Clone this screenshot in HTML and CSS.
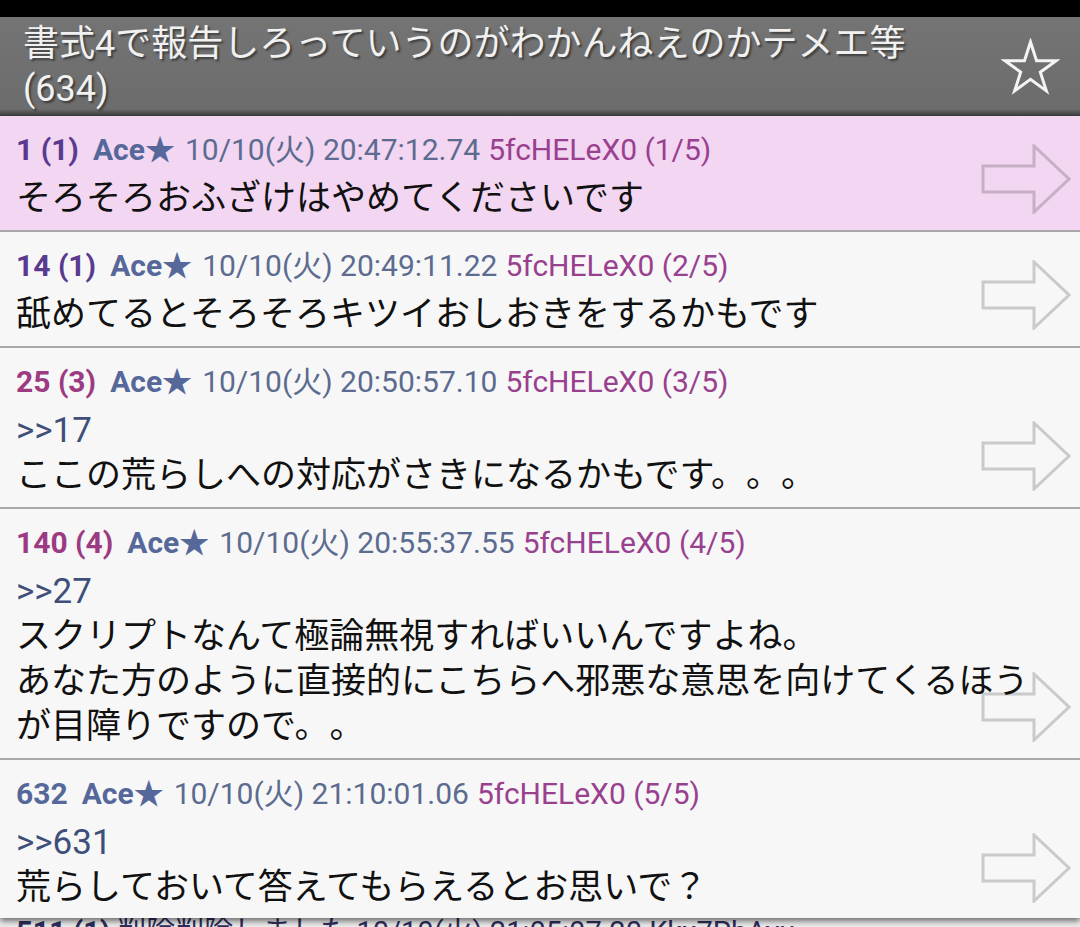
FILE: index.html
```html
<!DOCTYPE html>
<html lang="ja">
<head>
<meta charset="utf-8">
<title>書式4で報告しろっていうのがわかんねえのかテメエ等</title>
<link rel="stylesheet" href="styles.css">
</head>
<body>
<div class="statusbar"></div>
<header class="titlebar">
  <h1 class="title">書式4で報告しろっていうのがわかんねえのかテメエ等<span class="count">(634)</span></h1>
  <svg class="star" viewBox="-2 -2 59 57" width="59" height="57" aria-hidden="true"><polygon points="27.5,2 33.55,20.67 53.18,20.66 37.3,32.18 43.37,50.84 27.5,39.3 11.63,50.84 17.7,32.18 1.82,20.66 21.45,20.67" fill="none" stroke="#f4f4f4" stroke-width="3" stroke-linejoin="miter"/></svg>
</header>
<main class="popup">
  <article class="post hl">
    <div class="meta"><span class="num purple">1 (1)</span><span class="name">Ace★</span><span class="date">10/10(火) 20:47:12.74</span><span class="id">5fcHELeX0 (1/5)</span></div>
    <div class="body">そろそろおふざけはやめてくださいです</div>
    <svg class="arrow" viewBox="0 0 90 70" width="90" height="70" aria-hidden="true"><polygon points="2,22 53,22 53,2 88,35 53,68 53,48 2,48"/></svg>
  </article>
  <article class="post">
    <div class="meta"><span class="num purple">14 (1)</span><span class="name">Ace★</span><span class="date">10/10(火) 20:49:11.22</span><span class="id">5fcHELeX0 (2/5)</span></div>
    <div class="body">舐めてるとそろそろキツイおしおきをするかもです</div>
    <svg class="arrow" viewBox="0 0 90 70" width="90" height="70" aria-hidden="true"><polygon points="2,22 53,22 53,2 88,35 53,68 53,48 2,48"/></svg>
  </article>
  <article class="post">
    <div class="meta"><span class="num magenta">25 (3)</span><span class="name">Ace★</span><span class="date">10/10(火) 20:50:57.10</span><span class="id">5fcHELeX0 (3/5)</span></div>
    <div class="body"><span class="anchor">&gt;&gt;17</span><br>ここの荒らしへの対応がさきになるかもです。。。</div>
    <svg class="arrow" viewBox="0 0 90 70" width="90" height="70" aria-hidden="true"><polygon points="2,22 53,22 53,2 88,35 53,68 53,48 2,48"/></svg>
  </article>
  <article class="post">
    <div class="meta"><span class="num magenta">140 (4)</span><span class="name">Ace★</span><span class="date">10/10(火) 20:55:37.55</span><span class="id">5fcHELeX0 (4/5)</span></div>
    <div class="body"><span class="anchor">&gt;&gt;27</span><br>スクリプトなんて極論無視すればいいんですよね。<br>あなた方のように直接的にこちらへ邪悪な意思を向けてくるほう<br>が目障りですので。。</div>
    <svg class="arrow" viewBox="0 0 90 70" width="90" height="70" aria-hidden="true"><polygon points="2,22 53,22 53,2 88,35 53,68 53,48 2,48"/></svg>
  </article>
  <article class="post">
    <div class="meta"><span class="num blue">632</span><span class="name">Ace★</span><span class="date">10/10(火) 21:10:01.06</span><span class="id">5fcHELeX0 (5/5)</span></div>
    <div class="body"><span class="anchor">&gt;&gt;631</span><br>荒らしておいて答えてもらえるとお思いで？</div>
    <svg class="arrow" viewBox="0 0 90 70" width="90" height="70" aria-hidden="true"><polygon points="2,22 53,22 53,2 88,35 53,68 53,48 2,48"/></svg>
  </article>
</main>
<div class="under"><span class="under-num">511 (1)</span> 削除削除しました  10/10(火) 21:05:07.20 Kkx7PbAyu</div>
</body>
</html>
```

FILE: styles.css
```css
html, body {
  margin: 0;
  padding: 0;
}

body {
  width: 1080px;
  height: 927px;
  overflow: hidden;
  display: flex;
  flex-direction: column;
  background: #ececec;
  font-family: Roboto, "Noto Sans CJK JP", sans-serif;
}

.statusbar {
  flex: none;
  height: 17px;
  background: #000;
}

.titlebar {
  flex: none;
  height: 99px;
  box-sizing: border-box;
  display: flex;
  align-items: center;
  justify-content: space-between;
  padding: 0 20px 0 23px;
  background: linear-gradient(to bottom, #747474 0%, #6c6c6c 93%, #3c3c3c 100%);
}

.title {
  margin: 0;
  font-weight: 400;
  font-size: 36px;
  line-height: 45px;
  color: #f1f1f1;
  text-shadow: 2px 2px 2px rgba(0, 0, 0, 0.45);
}

.count {
  display: block;
}

.star {
  flex: none;
  margin-top: 0;
}

.popup {
  flex: none;
  height: 802px;
  overflow: hidden;
  position: relative;
  z-index: 1;
  background: #f7f7f7;
  box-shadow: 0 3px 6px rgba(0, 0, 0, 0.55);
}

.post {
  position: relative;
  padding: 13px 16px 9px 16px;
  border-bottom: 2px solid #a9a9a9;
  background: #f7f7f7;
}

.post.hl {
  background: #f3d6f1;
}

.meta {
  height: 42px;
  line-height: 42px;
  font-size: 30px;
  white-space: nowrap;
}

.num {
  font-weight: 700;
}

.num.purple {
  color: #5a3a90;
}

.num.magenta {
  color: #9c3a82;
}

.num.blue {
  color: #56689a;
}

.name {
  font-weight: 700;
  color: #56679a;
  margin-left: 14px;
}

.date {
  color: #5c6b90;
  margin-left: 10px;
}

.id {
  color: #99408f;
  margin-left: 8px;
}

.body {
  margin-top: 5px;
  font-size: 35px;
  line-height: 45px;
  color: #111;
  white-space: nowrap;
  text-spacing-trim: space-all;
}

.anchor {
  color: #3e4f7a;
}

.arrow {
  position: absolute;
  right: 9px;
  bottom: 16px;
}

.arrow polygon {
  fill: none;
  stroke: rgba(0, 0, 0, 0.18);
  stroke-width: 3;
}

.under {
  flex: 1;
  overflow: hidden;
  padding: 0 0 0 16px;
  font-size: 29px;
  line-height: 29px;
  color: #302d5c;
  white-space: nowrap;
}

.under-num {
  font-weight: 700;
}
```
